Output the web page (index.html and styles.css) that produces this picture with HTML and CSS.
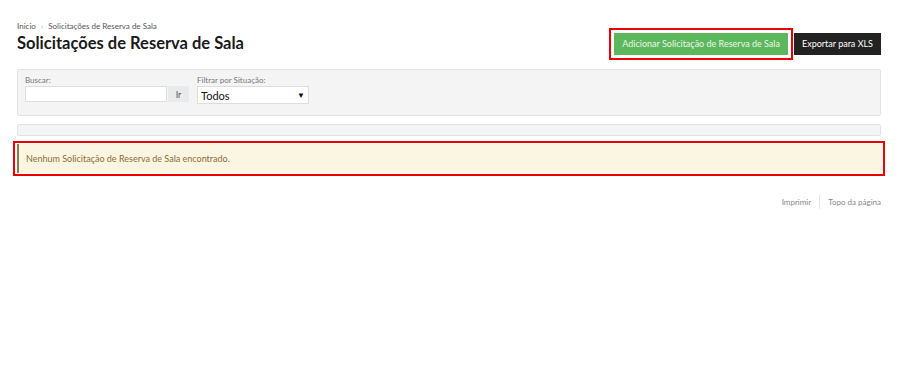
FILE: index.html
```html
<!DOCTYPE html>
<html lang="pt-BR">
<head>
    <meta charset="UTF-8">
    <title>Solicitações de Reserva de Sala</title>
    <link rel="stylesheet" href="styles.css">
</head>
<body>
    <div class="page">
        <div class="page-header">
            <div class="heading">
                <div class="breadcrumb">
                    <a href="#">Inicio</a>
                    <span class="sep">›</span>
                    <a href="#">Solicitações de Reserva de Sala</a>
                </div>
                <h1>Solicitações de Reserva de Sala</h1>
            </div>
            <div class="actions">
                <a href="#" class="btn btn-success highlight">Adicionar Solicitação de Reserva de Sala</a>
                <a href="#" class="btn btn-dark">Exportar para XLS</a>
            </div>
        </div>

        <form class="filters">
            <div class="field">
                <label for="q">Buscar:</label>
                <div class="search">
                    <input type="text" id="q">
                    <button type="button" class="btn-go">Ir</button>
                </div>
            </div>
            <div class="field">
                <label for="situacao">Filtrar por Situação:</label>
                <div class="select">
                    <span>Todos</span>
                    <span class="caret">▼</span>
                </div>
            </div>
        </form>

        <div class="bar"></div>

        <div class="alert-wrap">
            <div class="alert">Nenhum Solicitação de Reserva de Sala encontrado.</div>
        </div>

        <div class="footer-links">
            <a href="#">Imprimir</a>
            <a href="#">Topo da página</a>
        </div>
    </div>
</body>
</html>
```

FILE: styles.css
```css
body {
    margin: 0;
    font-family: Lato, "Open Sans", sans-serif;
    color: #222;
    background: #fff;
}
a {
    text-decoration: none;
}
.page {
    width: 864px;
    margin: 0 0 0 17px;
    padding-top: 20px;
}
.page-header {
    display: flex;
    justify-content: space-between;
    align-items: flex-start;
}
.breadcrumb {
    font-size: 8px;
    line-height: 12px;
    color: #666;
}
.breadcrumb a {
    color: #555;
}
.breadcrumb .sep {
    color: #aaa;
    margin: 0 3px;
}
h1 {
    margin: 0;
    font-size: 16.5px;
    line-height: 22px;
    font-weight: 700;
    color: #1a1a1a;
}
.actions {
    display: flex;
    align-items: center;
    margin-top: 13px;
}
.btn {
    display: inline-block;
    height: 22px;
    line-height: 22px;
    padding: 0 8px;
    font-size: 9px;
    color: #fff;
}
.btn-success {
    background: #5cb85c;
    color: #eaf6ea;
}
.btn-dark {
    background: #222;
    margin-left: 6px;
}
.highlight {
    outline: 2px solid #e00;
    outline-offset: 3px;
}
.filters {
    display: flex;
    gap: 8px;
    margin-top: 14px;
    height: 45px;
    padding: 0 7px;
    background: #f4f4f4;
    border: 1px solid #e2e2e2;
    border-radius: 2px;
}
.field label {
    display: block;
    font-size: 8px;
    line-height: 10px;
    color: #777;
    margin-top: 5px;
    margin-bottom: 1px;
}
.search {
    display: flex;
}
.search input {
    width: 136px;
    height: 14px;
    margin: 0;
    padding: 0 2px;
    border: 1px solid #ddd;
    background: #fff;
}
.btn-go {
    width: 21px;
    height: 16px;
    margin: 0 0 0 1px;
    padding: 0;
    border: none;
    background: #e8eaec;
    color: #555;
    font-family: Lato, sans-serif;
    font-size: 9px;
}
.select {
    display: flex;
    justify-content: space-between;
    align-items: center;
    width: 104px;
    height: 16px;
    padding: 0 3px;
    background: #fff;
    border: 1px solid #ddd;
    font-size: 11px;
    color: #111;
}
.select .caret {
    font-size: 8px;
}
.bar {
    margin-top: 8px;
    height: 10px;
    background: #f4f4f4;
    border: 1px solid #e2e2e2;
    border-radius: 2px;
}
.alert-wrap {
    margin: 5px -4px 0;
    border: 2px solid #e00;
    padding: 1px 1px 1px 2px;
}
.alert {
    height: 29px;
    line-height: 29px;
    padding-left: 7px;
    background: #fbf6e1;
    border-left: 2px solid #8a7a52;
    color: #8a6d3b;
    font-size: 9px;
}
.footer-links {
    display: flex;
    justify-content: flex-end;
    margin-top: 19px;
    font-size: 8px;
    line-height: 14px;
}
.footer-links a {
    color: #888;
    padding-left: 8px;
}
.footer-links a + a {
    margin-left: 8px;
    border-left: 1px solid #e4e4e4;
}
```
